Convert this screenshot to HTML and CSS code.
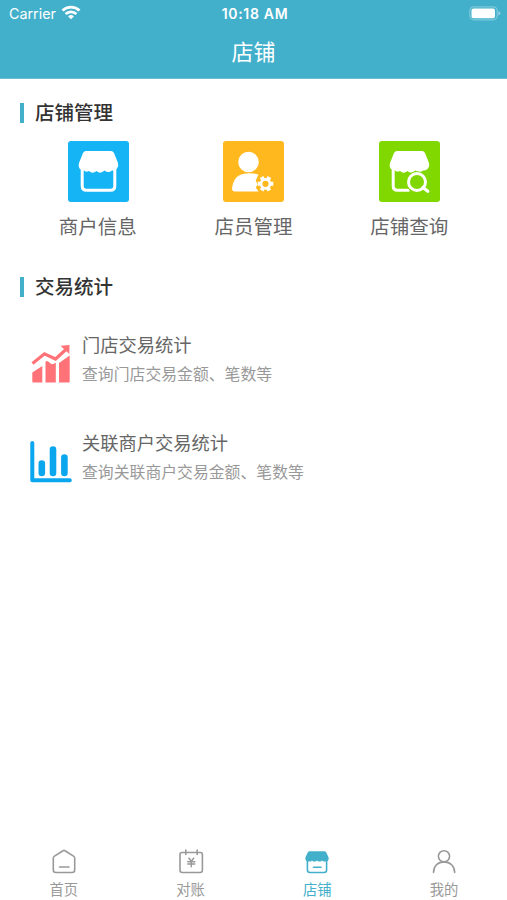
FILE: index.html
```html
<!DOCTYPE html>
<html lang="zh-CN">
<head>
<meta charset="utf-8">
<meta name="viewport" content="width=device-width, initial-scale=1">
<title>店铺</title>
<link rel="stylesheet" href="styles.css">
</head>
<body>
<div class="app">
  <header class="header">
    <div class="status">
      <div class="carrier"><span>Carrier</span>
        <svg width="20" height="15" viewBox="0 0 20 15" fill="none" stroke="#fff" stroke-width="2.8"><path d="M1.500 5.600a12.200 12.200 0 0 1 17 0M4.600 9a7.800 7.800 0 0 1 10.800 0"/><path d="M10 14.200 7.100 11.400a4.200 4.200 0 0 1 5.800 0z" fill="#fff" stroke="none"/></svg>
      </div>
      <div class="time">10:18 AM</div>
      <div class="battery">
        <svg width="32" height="15" viewBox="0 0 32 15"><rect x=".8" y=".8" width="27.4" height="13" rx="4" fill="none" stroke="#7cc8d9" stroke-width="1.2"/><rect x="2.500" y="2.600" width="23.500" height="9.600" rx="2" fill="#fff"/><path d="M29.300 5.100q2.100.8 2.100 2.200t-2.100 2.200z" fill="#91d0df"/></svg>
      </div>
    </div>
    <h1 class="title">店铺</h1>
  </header>
  <main class="main">
    <h2 class="section">店铺管理</h2>
    <div class="grid">
      <div class="cell">
        <svg class="tile" viewBox="0 0 61 61"><rect width="61" height="61" rx="3" fill="#14b4f5"/><path d="M18 10h25q2 0 3 2l4 10q1 3-1 5.500-2 2.500-5 2-3.500 3-7.500 0-4 4-8 .5-4 3.500-7.500 0-3.500 1.500-5-.5-3-.5-4.500-2-1.500-2.500-.5-5.500L15 12q1-2 3-2z" fill="#fff"/><path d="M14.200 27v18q0 4.300 4.300 4.300h24q4.300 0 4.300-4.300V27" fill="none" stroke="#fff" stroke-width="3"/></svg>
        <span>商户信息</span>
      </div>
      <div class="cell">
        <svg class="tile" viewBox="0 0 61 61"><rect width="61" height="61" rx="3" fill="#ffb91f"/><circle cx="25.500" cy="21" r="10.300" fill="#fff"/><path d="M35.500 33.500q-4-1.300-9.500-1.300-11 0-14.500 6.800Q9.200 43.500 9 47.500q0 3 3 3h23.500l-2.800-4 2-3-2-4z" fill="#fff"/><g transform="translate(42.500 42.800)"><circle r="4.500" fill="none" stroke="#fff" stroke-width="2.800"/><path d="M5 0h2.800M2.500 4.330l1.400 2.430M-2.500 4.330l-1.400 2.430M-5 0h-2.800M-2.500-4.330l-1.400-2.430M2.500-4.330l1.400-2.430" stroke="#fff" stroke-width="4"/></g></svg>
        <span>店员管理</span>
      </div>
      <div class="cell">
        <svg class="tile" viewBox="0 0 61 61"><rect width="61" height="61" rx="3" fill="#80d800"/><path d="M18 10h25q2 0 3 2l4 10q1 3-1 5.500-2 2.500-5 2-3.500 3-7.500 0-4 4-8 .5-4 3.500-7.500 0-3.500 1.500-5-.5-3-.5-4.500-2-1.500-2.500-.5-5.500L15 12q1-2 3-2z" fill="#fff"/><path d="M14.200 27v18q0 4.300 4.300 4.300h12" fill="none" stroke="#fff" stroke-width="3"/><circle cx="38" cy="41" r="10.800" fill="#80d800"/><circle cx="38" cy="41" r="8.500" fill="none" stroke="#fff" stroke-width="3"/><path d="m44 46.500 4.800 3.800" stroke="#fff" stroke-width="3.300" stroke-linecap="round"/></svg>
        <span>店铺查询</span>
      </div>
    </div>
    <h2 class="section">交易统计</h2>
    <div class="list">
      <div class="item">
        <svg class="chart" viewBox="0 0 42 42" fill="#ff7378"><path d="M2.300 29.500 12.300 23v16.500h-9q-1 0-1-1zM15.500 18.500q1-1 2.500 0l3.500 2.500q1.500.8 4.300-1.500v20H15.500zM29 20l10.700-7.500v26q0 1-1 1H29z"/><path d="m2.500 20.500 12-9.700 11 5.200 11-10" fill="none" stroke="#ff7378" stroke-width="3.200"/><path d="m30.500 2.800 9-.8-.2 9z"/></svg>
        <div class="text"><h3>门店交易统计</h3><p>查询门店交易金额、笔数等</p></div>
      </div>
      <div class="item">
        <svg class="chart" viewBox="0 0 42 42" fill="none" stroke="#0aa6ee" stroke-linecap="round"><path d="M2.300 2v37.200h37.500" stroke-width="4" stroke-linejoin="round"/><path d="M11.800 22.500v9.500M23 8.500V32M34.400 16.500V32" stroke-width="6.600"/></svg>
        <div class="text"><h3>关联商户交易统计</h3><p>查询关联商户交易金额、笔数等</p></div>
      </div>
    </div>
  </main>
  <nav class="tabs">
    <div class="tab">
      <svg viewBox="0 0 26 26"><path d="M12 1.700q1-.6 2 0l8.500 5.400q1.200.8 1.200 2V21q0 2.500-2.500 2.500H4.800Q2.300 23.500 2.300 21V9.100q0-1.200 1.200-2zM8.500 18h9.500"/></svg><span>首页</span>
    </div>
    <div class="tab">
      <svg viewBox="0 0 26 26"><path d="M7.500 3.500H4Q2 3.500 2 5.500v15.800q0 2.200 2.200 2.200h18q2.200 0 2.200-2.200V5.500q0-2-2-2H19.500M7.800 3.500h11.400M7.800 1v4.500M19.200 1v4.500"/><path d="m11 9.200 2.300 3L15.600 9.200M9.800 12.800h7M9.800 15h7M13.300 12.500v5.300" stroke-width="1.500"/></svg><span>对账</span>
    </div>
    <div class="tab active">
      <svg viewBox="0 0 26 26"><path d="M6 2.200h14q1.700 0 2.300 1.300l2.200 4.800q.8 2.700-1.700 4.200h-3.500l-1.200-1-1.300 1h-2.500l-1.300-1-1.300 1H9.200l-1.200-1-1.200 1H3.200Q.7 11 1.500 8.300l2.200-4.800Q4.300 2.200 6 2.200z" fill="#43b0cb" stroke="none"/><path d="M3.400 11v10q0 2.500 2.500 2.500h14.200q2.500 0 2.500-2.500V11M9.500 18.200h7.500"/></svg><span>店铺</span>
    </div>
    <div class="tab">
      <svg viewBox="0 0 26 26"><circle cx="13" cy="7.300" r="5.600"/><path d="M2.500 23.500C2.500 17 7 12.900 13 12.900S23.700 17 23.700 23.500"/></svg><span>我的</span>
    </div>
  </nav>
</div>
</body>
</html>
```

FILE: styles.css
```css
* { box-sizing: border-box; margin: 0; padding: 0; }
body { font-family: "Noto Sans CJK SC", sans-serif; background: #fff; color: #666; }
svg { display: block; flex: none; }
.app { height: 900px; display: flex; flex-direction: column; overflow: hidden; }
.header { height: 79px; background: #43b0cb; color: #fff; border-bottom: 1px solid #68bdd3; flex: none; }
.status { height: 27px; display: grid; grid-template-columns: 1fr auto 1fr; align-items: center; padding: 0 6px 0 9px; font-family: Inter, sans-serif; font-size: 14.3px; line-height: 27px; }
.carrier { display: flex; align-items: center; gap: 5px; }
.carrier svg { margin-top: -2px; }
.time { font-weight: 600; font-size: 14px; letter-spacing: .7px; }
.battery { display: flex; justify-content: flex-end; }
.title { font-size: 22px; font-weight: 400; line-height: 47px; text-align: center; }
.main { flex: 1; padding: 19px 20px 0; }
.section { display: flex; align-items: center; gap: 11px; font-size: 19.5px; line-height: 28px; font-weight: 500; color: #333; }
.section::before { content: ""; width: 4px; height: 20px; margin-top: 2px; background: #43b0cb; }
.grid { display: grid; grid-template-columns: repeat(3, 1fr); padding: 15px 0 0; margin-bottom: 31px; }
.cell { display: flex; flex-direction: column; align-items: center; gap: 9px; font-size: 19.5px; line-height: 30px; }
.tile { width: 61px; height: 61px; margin-left: 1px; }
.list { padding: 29px 0 0 10px; }
.item { height: 98px; display: flex; gap: 10px; }
.chart { width: 42px; height: 42px; margin-top: 14px; }
.text h3 { font-size: 18.25px; font-weight: 400; line-height: 30px; }
.text p { font-size: 15.85px; line-height: 28px; margin-top: 1px; color: #999; }
.tabs { height: 56px; display: flex; flex: none; }
.tab { flex: 1; display: flex; flex-direction: column; align-items: center; gap: 3px; padding: 5px 0 0 1px; font-size: 14.3px; line-height: 22px; color: #999; }
.tab svg { width: 26px; height: 26px; fill: none; stroke: #999; stroke-width: 1.6; stroke-linecap: round; stroke-linejoin: round; }
.tab.active { color: #43b0cb; }
.tab.active svg { stroke: #43b0cb; }
```
